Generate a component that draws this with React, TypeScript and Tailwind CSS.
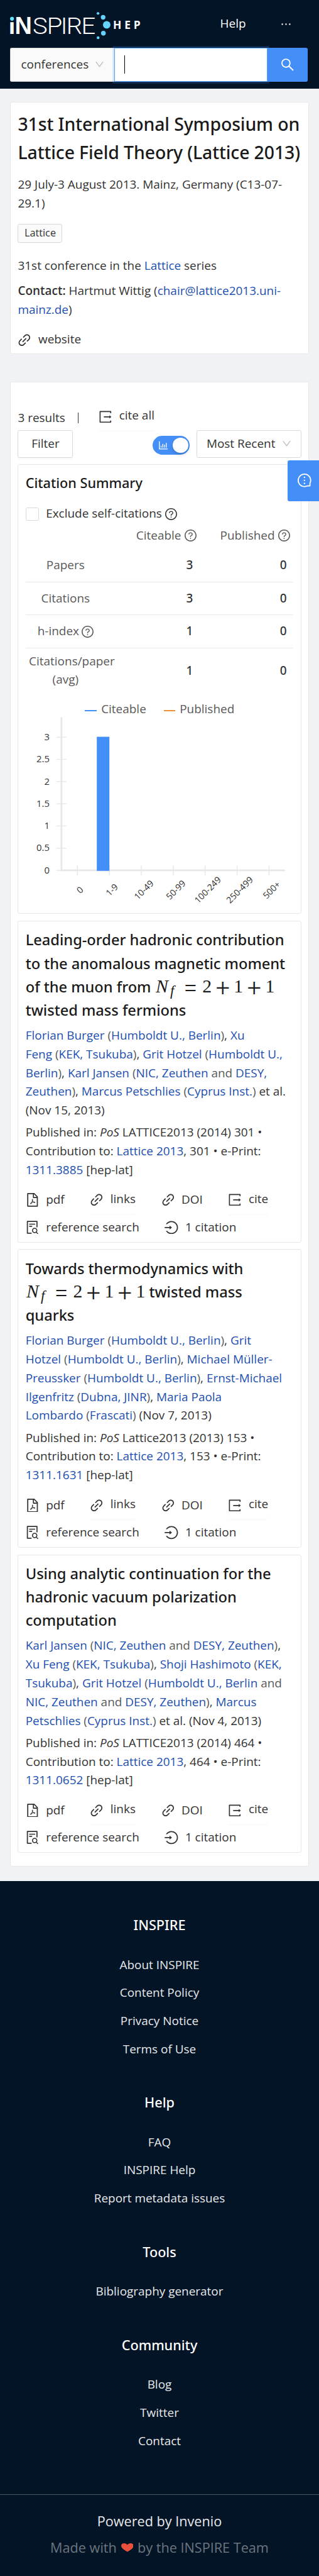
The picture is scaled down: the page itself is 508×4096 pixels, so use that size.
import React from "react";
import {
  AiOutlineBarChart,
  AiOutlineDown,
  AiOutlineEllipsis,
  AiOutlineFilePdf,
  AiOutlineFileSearch,
  AiOutlineLink,
  AiOutlineLogin,
  AiOutlineMessage,
  AiOutlineQuestionCircle,
  AiOutlineSearch,
} from "react-icons/ai";

const BOX = "64 64 896 896";

function HelpIcon() {
  return <AiOutlineQuestionCircle viewBox={BOX} size={14} className="shrink-0" />;
}

function ExportIcon() {
  return (
    <svg viewBox={BOX} width="16" height="16" fill="currentColor" className="shrink-0">
      <path d="M888 757h-54c-4 0-7 3-7 8v62H197V197h630v62c0 4 3 8 7 8h54c4 0 8-4 8-8V159c0-17-14-31-31-31H159c-17 0-31 14-31 31v706c0 17 14 31 31 31h706c17 0 31-14 31-31V765c0-4-4-8-8-8z" />
      <path d="M902 505L789 413c-5-4-13 0-13 7v56H416c-4 0-8 4-8 8v56c0 4 4 8 8 8h360v56c0 7 8 11 13 7l113-92c4-4 4-10 0-14z" />
    </svg>
  );
}

function Logo() {
  return (
    <svg width="156" height="32" viewBox="12 14 156 32" className="block shrink-0 overflow-visible">
      <defs>
        <clipPath id="stem">
          <rect x="8" y="26" width="12" height="20" />
        </clipPath>
      </defs>
      <g fill="#fff">
        <text clipPath="url(#stem)" x="10.4" y="39.5" fontFamily="Liberation Sans" fontWeight="700" fontSize="28">i</text>
        <text x="17.6" y="39.5" fontFamily="Liberation Sans" fontWeight="700" fontSize="28.3" textLength="20.2" lengthAdjust="spacingAndGlyphs">N</text>
        <text transform="scale(1.08 1)" x="35.8 51.3 66.4 72.5 88.8" y="39.5" fontFamily="Roboto" fontWeight="300" fontSize="27.3">SPIRE</text>
        <text x="133.2" y="33.9" fontFamily="Open Sans" fontWeight="700" fontSize="12.9" letterSpacing="3.5">HEP</text>
      </g>
      <circle cx="14.3" cy="22" r="2.3" fill="#66e4fb" />
      <g fill="#65d3fd">
        <circle cx="115.5" cy="15.7" r="1.6" />
        <circle cx="121.5" cy="20.3" r="2.7" />
        <circle cx="125.7" cy="29.2" r="4.4" />
        <circle cx="121.8" cy="39" r="2.8" />
        <circle cx="115.6" cy="44.3" r="1.7" />
      </g>
    </svg>
  );
}

function Header() {
  return (
    <header className="h-[104px] bg-[#031426] px-3 pt-3.5">
      <div className="flex h-8 text-white">
        <Logo />
        <span className="ml-[91px] pt-[3px]">Help</span>
        <AiOutlineEllipsis viewBox={BOX} size={14} className="ml-[40px] mt-[7.5px]" />
      </div>
      <div className="mt-2.5 flex h-10 w-[350px]">
        <div className="flex w-[122.5px] items-center rounded-l-xs border border-r-0 border-[#d9d9d9] bg-[#fafafa] pl-3">
          conferences
          <AiOutlineDown viewBox={BOX} size={11} className="ml-[7px] text-[#bfbfbf]" />
        </div>
        <div className="z-10 flex w-[180px] items-center border border-[#58a2f8] bg-white pl-[11px] shadow-[0_0_0_2px_rgba(66,142,247,0.22)]">
          <span className="h-[21.5px] w-px bg-black" />
        </div>
        <div className="flex flex-1 items-center justify-center rounded-r-xs bg-[#448ef7] text-white">
          <AiOutlineSearch viewBox={BOX} size={16} />
        </div>
      </div>
    </header>
  );
}

function A({ children }: { children: React.ReactNode }) {
  return <a className="text-[#1e4faf]">{children}</a>;
}

function ConferenceCard() {
  return (
    <section className="mx-3 mt-4 h-[296px] rounded-xs border border-[#e8e8e8] bg-white px-[8.3px] pt-[8.5px]">
      <h1 className="font-['Noto_Sans',sans-serif] text-[21px]/[33px] font-medium tracking-[-0.0037em] whitespace-nowrap text-[#1a1a1a]">
        31st International Symposium on
        <br />
        Lattice Field Theory (Lattice 2013)
      </h1>
      <p className="mt-[11px]">
        29 July-3 August 2013. Mainz, Germany (C13-07-
        <br />
        29.1)
      </p>
      <div className="mt-[13px] flex">
        <span className="h-[22px] rounded-xs border border-[#d9d9d9] bg-[#fafafa] px-[7px] text-xs/[20.5px]">Lattice</span>
      </div>
      <p className="mt-4">
        31st conference in the <A>Lattice</A> series
      </p>
      <p className="mt-2">
        <b className="font-semibold">Contact:</b> Hartmut Wittig (<A>chair@lattice2013.uni-
        <br />
        mainz.de</A>)
      </p>
      <div className="mt-[13px] flex items-center gap-2">
        <AiOutlineLink viewBox={BOX} size={16} />
        website
      </div>
    </section>
  );
}

const METRICS = [
  { label: "Papers", citeable: "3", published: "0" },
  { label: "Citations", citeable: "3", published: "0" },
  { label: "h-index", citeable: "1", published: "0", help: true },
];

function Value({ children }: { children: React.ReactNode }) {
  return (
    <span className="pr-2 text-right font-['Noto_Sans',sans-serif] font-medium text-[#333]">{children}</span>
  );
}

function MetricsTable() {
  return (
    <div className="text-[#595959]">
      <div className="grid h-[36px] grid-cols-[94px_111px_1fr] pt-[9.5px]">
        <span />
        <span className="flex h-[22px] items-center justify-end gap-1 pr-[4px]">
          Citeable <HelpIcon />
        </span>
        <span className="flex h-[22px] items-center justify-end gap-1 pr-[4px]">
          Published <HelpIcon />
        </span>
      </div>
      {METRICS.map((m) => (
        <div key={m.label} className="grid h-[39px] grid-cols-[94px_111px_1fr] items-center border-b border-[#e8e8e8]">
          <span className="flex items-center justify-center gap-[3px]">
            {m.label}
            {m.help && <HelpIcon />}
          </span>
          <Value>{m.citeable}</Value>
          <Value>{m.published}</Value>
        </div>
      ))}
      <div className="grid h-[52px] grid-cols-[94px_111px_1fr] items-center">
        <span className="px-1 text-center">Citations/paper (avg)</span>
        <Value>1</Value>
        <Value>0</Value>
      </div>
    </div>
  );
}

const Y_TICKS = ["3", "2.5", "2", "1.5", "1", "0.5", "0"];
const X_TICKS = ["0", "1-9", "10-49", "50-99", "100-249", "250-499", "500+"];

function CitationChart() {
  return (
    <svg
      width="315"
      height="224"
      viewBox="30 841 315 224"
      className="-mt-[4.3px] block"
      fontFamily="Open Sans"
      fontSize="11"
      fill="#333"
    >
      <g fill="#e6e7e9">
        <rect x="71" y="843.5" width="2" height="181" />
        <rect x="72" y="1022.4" width="263" height="2" />
        {Y_TICKS.map((t, i) => (
          <rect key={t} x="66" y={866.5 + i * 26.08} width="12" height="1" />
        ))}
        {X_TICKS.map((t, i) => (
          <rect key={t} x={90.3 + i * 37.57} y="1017.5" width="1" height="12" />
        ))}
      </g>
      <rect x="113.6" y="866.5" width="14.8" height="157.5" fill="#448ef7" />
      {Y_TICKS.map((t, i) => (
        <text key={t} x="58" y={870.6 + i * 26.05} textAnchor="end">{t}</text>
      ))}
      {X_TICKS.map((t, i) => (
        <text
          key={t}
          x="0"
          y="3.7"
          fontSize="10.4"
          textAnchor="middle"
          transform={`translate(${93.8 + i * 37.57} 1046.4) rotate(-45)`}
        >
          {t}
        </text>
      ))}
    </svg>
  );
}

function CitationSummary() {
  return (
    <div className="mt-2 h-[528px] rounded-xs border border-[#e8e8e8] px-[8.3px] pt-[8.6px]">
      <h2 className="font-['Noto_Sans',sans-serif] text-[16px]/[25px] font-medium text-[#1a1a1a]">Citation Summary</h2>
      <div className="mt-[13px] flex h-[22px] items-center">
        <span className="size-4 rounded-xs border border-[#d9d9d9]" />
        <span className="ml-2 mr-1">Exclude self-citations</span>
        <HelpIcon />
      </div>
      <div className="-mt-[6px]">
        <MetricsTable />
      </div>
      <div className="mt-[8.5px] flex h-[22px] items-center pl-[70px] text-[#595959]">
        <span className="mr-[5px] mt-[3px] h-[2px] w-3.5 bg-[#448ef7]" />
        Citeable
        <span className="ml-[20.5px] mr-[5px] mt-[3px] h-[2px] w-3.5 bg-[#ec9137]" />
        Published
      </div>
      <CitationChart />
    </div>
  );
}

function Nf() {
  return (
    <span className="ml-px inline-flex items-baseline font-['Liberation_Serif',serif] text-[22px]/[20px] font-normal tracking-normal whitespace-nowrap">
      <i className="w-[17px]">N</i>
      <i className="w-[9px] translate-y-[4px] text-[17px]">f</i>
      <span className="ml-[5px] flex w-5 translate-y-[4.3px] justify-center font-['Roboto',sans-serif] text-[29px] font-light">=</span>
      <span className="ml-[4px] flex w-[11px] justify-center">2</span>
      <span className="ml-[3px] flex w-5 translate-y-[4.3px] justify-center font-['Roboto',sans-serif] text-[29px] font-light">+</span>
      <span className="ml-[3px] flex w-[11px] justify-center">1</span>
      <span className="ml-[3px] flex w-5 translate-y-[4.3px] justify-center font-['Roboto',sans-serif] text-[29px] font-light">+</span>
      <span className="ml-[3px] flex w-[11px] justify-center">1</span>
    </span>
  );
}

type Author = { name: string; affiliations: string[] };

const HU = "Humboldt U., Berlin";
const KEK = "KEK, Tsukuba";
const NIC = "NIC, Zeuthen";
const DESY = "DESY, Zeuthen";

const PAPERS: {
  id: string;
  title: React.ReactNode;
  authors: Author[];
  tail: string;
  journal: string;
  page: string;
}[] = [
  {
    id: "1311.3885",
    title: (
      <>
        Leading-order hadronic contribution
        <br />
        to the anomalous magnetic moment
        <br />
        of the muon from <Nf />
        <br />
        twisted mass fermions
      </>
    ),
    authors: [
      { name: "Florian Burger", affiliations: [HU] },
      { name: "Xu Feng", affiliations: [KEK] },
      { name: "Grit Hotzel", affiliations: [HU] },
      { name: "Karl Jansen", affiliations: [NIC, DESY] },
      { name: "Marcus Petschlies", affiliations: ["Cyprus Inst."] },
    ],
    tail: " et al. (Nov 15, 2013)",
    journal: "LATTICE2013 (2014) 301",
    page: "301",
  },
  {
    id: "1311.1631",
    title: (
      <>
        Towards thermodynamics with
        <br />
        <Nf /> twisted mass
        <br />
        quarks
      </>
    ),
    authors: [
      { name: "Florian Burger", affiliations: [HU] },
      { name: "Grit Hotzel", affiliations: [HU] },
      { name: "Michael Müller-Preussker", affiliations: [HU] },
      { name: "Ernst-Michael Ilgenfritz", affiliations: ["Dubna, JINR"] },
      { name: "Maria Paola Lombardo", affiliations: ["Frascati"] },
    ],
    tail: " (Nov 7, 2013)",
    journal: "Lattice2013 (2013) 153",
    page: "153",
  },
  {
    id: "1311.0652",
    title: (
      <>
        Using analytic continuation for the
        <br />
        hadronic vacuum polarization
        <br />
        computation
      </>
    ),
    authors: [
      { name: "Karl Jansen", affiliations: [NIC, DESY] },
      { name: "Xu Feng", affiliations: [KEK] },
      { name: "Shoji Hashimoto", affiliations: [KEK] },
      { name: "Grit Hotzel", affiliations: [HU, NIC, DESY] },
      { name: "Marcus Petschlies", affiliations: ["Cyprus Inst."] },
    ],
    tail: " et al. (Nov 4, 2013)",
    journal: "LATTICE2013 (2014) 464",
    page: "464",
  },
];

function Authors({ authors }: { authors: Author[] }) {
  return (
    <>
      {authors.map((a, i) => (
        <React.Fragment key={a.name}>
          {i > 0 && ", "}
          <A>{a.name}</A>
          <span className="text-[#595959]">
            {"\u00a0("}
            {a.affiliations.map((f, j) => (
              <React.Fragment key={f}>
                {j > 0 && " and "}
                <A>{f}</A>
              </React.Fragment>
            ))}
            )
          </span>
        </React.Fragment>
      ))}
    </>
  );
}

function Action({ icon, label, button }: { icon: React.ReactNode; label: string; button?: boolean }) {
  return (
    <span
      className={
        button
          ? "flex h-8 items-center gap-2 rounded-xs shadow-[0_2px_0_rgba(0,0,0,0.016)]"
          : "flex h-8 items-center gap-2"
      }
    >
      {icon}
      <span className={button ? "pb-[2.5px]" : ""}>{label}</span>
    </span>
  );
}

function PaperCard({ paper }: { paper: (typeof PAPERS)[number] }) {
  return (
    <article className="mt-2 rounded-xs border border-[#e8e8e8] px-[8.3px] pt-[8.5px] pb-[1px]">
      <h3 className="font-['Noto_Sans',sans-serif] text-[17.5px]/[27.5px] font-medium tracking-[-0.0015em] whitespace-nowrap text-[#1a1a1a]">
        {paper.title}
      </h3>
      <p className="mt-[5px]">
        <Authors authors={paper.authors} />
        {paper.tail}
      </p>
      <p className="mt-1">
        Published in: <i>PoS</i> {paper.journal} •
        <br />
        Contribution to: <A>Lattice 2013</A>, {paper.page} • e-Print:
        <br />
        <A>{paper.id}</A> [hep-lat]
      </p>
      <div className="mt-2 flex gap-[30px]">
        <Action icon={<AiOutlineFilePdf viewBox={BOX} size={16} />} label="pdf" />
        <Action button icon={<AiOutlineLink viewBox={BOX} size={16} />} label="links" />
        <Action icon={<AiOutlineLink viewBox={BOX} size={16} />} label="DOI" />
        <Action button icon={<ExportIcon />} label="cite" />
      </div>
      <div className="flex gap-[30px]">
        <Action icon={<AiOutlineFileSearch viewBox={BOX} size={16} />} label="reference search" />
        <Action icon={<AiOutlineLogin viewBox={BOX} size={16} />} label="1 citation" />
      </div>
    </article>
  );
}

function Results() {
  return (
    <section className="mx-3 mt-[32.5px] h-[1744.5px] rounded-xs border border-[#e8e8e8] bg-white px-[8.3px] pt-[24.3px]">
      <div className="flex h-8 items-center">
        <span className="pt-1">3 results</span>
        <span className="mt-[3px] ml-[15px] h-[12.5px] w-px bg-[#333]" />
        <span className="ml-[23.5px]">
          <Action button icon={<ExportIcon />} label="cite all" />
        </span>
      </div>
      <div className="flex h-8 items-center">
        <span className="flex h-8 w-[65px] items-center justify-center rounded-xs border border-[#d9d9d9] bg-white shadow-[0_2px_0_rgba(0,0,0,0.016)]">
          Filter
        </span>
        <span className="mt-[3px] ml-auto flex h-[22px] w-11 items-center justify-between rounded-full bg-[#448ef7] pr-[2px] pl-[7px] text-white">
          <AiOutlineBarChart viewBox={BOX} size={12} />
          <span className="size-[18px] rounded-full bg-white shadow-[0_2px_4px_rgba(0,35,11,0.2)]" />
        </span>
        <span className="ml-2 flex h-8 w-[123px] items-center justify-between rounded-xs border border-[#d9d9d9] bg-white pr-[11px] pl-[11px]">
          Most Recent
          <AiOutlineDown viewBox={BOX} size={11} className="text-[#bfbfbf]" />
        </span>
      </div>
      <CitationSummary />
      {PAPERS.map((p) => (
        <PaperCard key={p.id} paper={p} />
      ))}
    </section>
  );
}

const FOOTER = [
  { title: "INSPIRE", links: ["About INSPIRE", "Content Policy", "Privacy Notice", "Terms of Use"] },
  { title: "Help", links: ["FAQ", "INSPIRE Help", "Report metadata issues"] },
  { title: "Tools", links: ["Bibliography generator"] },
  { title: "Community", links: ["Blog", "Twitter", "Contact"] },
];

function Footer() {
  return (
    <footer className="mt-[16.5px] h-[817px] bg-[#031426] text-center text-[#e6e8ea]">
      <div className="flex flex-col gap-[39px] pt-[39.3px]">
        {FOOTER.map((s) => (
          <div key={s.title}>
            <h4 className="mb-[23.5px] font-['Noto_Sans',sans-serif] text-[16px]/[25px] font-medium text-white">{s.title}</h4>
            <div className="flex flex-col gap-[11px]">
              {s.links.map((l) => (
                <a key={l}>{l}</a>
              ))}
            </div>
          </div>
        ))}
      </div>
      <div className="mt-[51px] border-t border-[#4a545f] pt-[19px] text-[16px]/[25px]">
        <p>Powered by Invenio</p>
        <p className="mt-1.5 flex items-center justify-center gap-[5px] text-[#6b747e]">
          Made with
          <svg width="14.5" height="10" viewBox="0 0 29 20" fill="#e9513c">
            <path d="M14.5 20C8 16 0 12 0 6C0 2 3 0 7 0C10.5 0 13.5 1.5 14.5 4C15.5 1.5 18.5 0 22 0C26 0 29 2 29 6C29 12 21 16 14.5 20Z" />
          </svg>
          by the INSPIRE Team
        </p>
      </div>
    </footer>
  );
}

export default function App() {
  return (
    <div className="relative w-full overflow-hidden bg-[#f0f2f5] font-['Open_Sans',sans-serif] text-[14px]/[22px] text-[#333] [zoom:1.3536]">
      <Header />
      <main>
        <ConferenceCard />
        <Results />
      </main>
      <Footer />
      <button className="absolute top-[540.5px] right-0 flex h-12 w-[37px] items-center justify-center rounded-l-xs bg-[#448ef7] pl-[3px] text-white">
        <AiOutlineMessage viewBox={BOX} size={16} className="-rotate-90" />
      </button>
    </div>
  );
}
